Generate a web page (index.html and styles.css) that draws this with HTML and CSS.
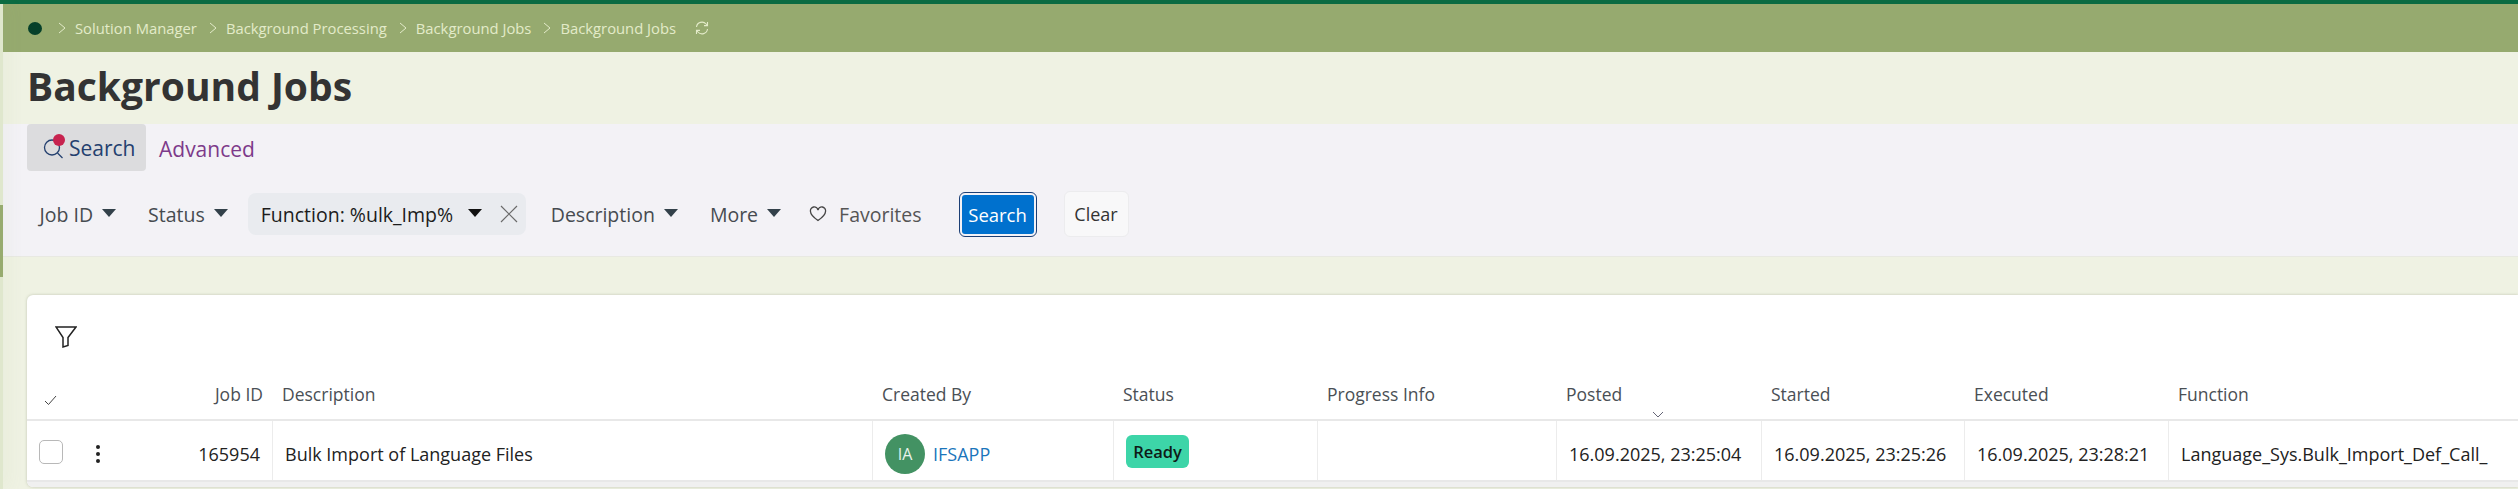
FILE: index.html
```html
<!DOCTYPE html>
<html lang="en">
<head>
<meta charset="utf-8">
<title>Background Jobs</title>
<link rel="stylesheet" href="styles.css">
</head>
<body>
<div class="topline"></div>
<div class="shell">
  <div class="rail"><div class="rail-mark"></div></div>
  <main class="main">
    <nav class="crumbs">
      <span class="dot"></span>
      <svg class="chev" viewBox="0 0 8 12"><path d="M1 1l6 5-6 5"/></svg><span>Solution Manager</span>
      <svg class="chev" viewBox="0 0 8 12"><path d="M1 1l6 5-6 5"/></svg><span>Background Processing</span>
      <svg class="chev" viewBox="0 0 8 12"><path d="M1 1l6 5-6 5"/></svg><span>Background Jobs</span>
      <svg class="chev" viewBox="0 0 8 12"><path d="M1 1l6 5-6 5"/></svg><span>Background Jobs</span>
      <svg class="refresh" viewBox="0 0 16 16"><path d="M2.5 7a5.5 5.5 0 0 1 9.6-3l1.4 1.6M13.5 2v3.6H10M13.5 9a5.5 5.5 0 0 1-9.6 3L2.5 10.4M2.5 14v-3.6H6"/></svg>
    </nav>
    <h1 class="title">Background Jobs</h1>
    <section class="panel">
      <div class="tabs">
        <button class="tab tab-active">
          <span class="tab-icon">
            <svg viewBox="0 0 20 22"><circle cx="9" cy="10.5" r="7.5"/><path d="M14.500 16l5 5"/></svg>
            <span class="badge"></span>
          </span>Search</button>
        <button class="tab tab-link">Advanced</button>
      </div>
      <div class="filters">
        <span class="filter">Job ID<i class="caret"></i></span>
        <span class="filter">Status<i class="caret"></i></span>
        <span class="chip">Function: %ulk_Imp%<i class="caret caret-dark"></i>
          <svg class="close" viewBox="0 0 18 18"><path d="M1 1l16 16M17 1L1 17"/></svg></span>
        <span class="filter">Description<i class="caret"></i></span>
        <span class="filter">More<i class="caret"></i></span>
        <span class="fav">
          <svg viewBox="0 0 18 16"><path d="M9 14.500C4 11 1.500 8.500 1.500 5.500A3.800 3.800 0 0 1 9 4a3.800 3.800 0 0 1 7.500 1.500C16.500 8.500 14 11 9 14.500z"/></svg>Favorites</span>
        <button class="btn-primary">Search</button>
        <button class="btn-clear">Clear</button>
      </div>
    </section>
    <section class="card">
      <div class="toolbar">
        <svg class="funnel" viewBox="0 0 22 22"><path d="M1 1h20l-8 10.500v8l-5 1.500V11.500z"/></svg>
      </div>
      <div class="grid grid-head">
        <div class="cell check-head"><svg viewBox="0 0 13 10"><path d="M1 6l3.500 3.500L12 1"/></svg></div>
        <div class="cell num">Job ID</div>
        <div class="cell">Description</div>
        <div class="cell">Created By</div>
        <div class="cell">Status</div>
        <div class="cell">Progress Info</div>
        <div class="cell sorted">Posted<svg class="sort" viewBox="0 0 12 7"><path d="M1 1l5 5 5-5"/></svg></div>
        <div class="cell">Started</div>
        <div class="cell">Executed</div>
        <div class="cell">Function</div>
      </div>
      <div class="grid grid-row">
        <div class="cell select"><span class="checkbox"></span><span class="kebab"><i></i><i></i><i></i></span></div>
        <div class="cell num">165954</div>
        <div class="cell bordered">Bulk Import of Language Files</div>
        <div class="cell bordered user"><span class="avatar">IA</span><a class="user-link">IFSAPP</a></div>
        <div class="cell bordered"><span class="status">Ready</span></div>
        <div class="cell bordered"></div>
        <div class="cell bordered">16.09.2025, 23:25:04</div>
        <div class="cell bordered">16.09.2025, 23:25:26</div>
        <div class="cell bordered">16.09.2025, 23:28:21</div>
        <div class="cell bordered">Language_Sys.Bulk_Import_Def_Call_</div>
      </div>
      <div class="card-foot"></div>
    </section>
  </main>
</div>
</body>
</html>
```
FILE: styles.css
```css
* { box-sizing: border-box; }
html, body { margin: 0; height: 100%; }
body { font-family: "Open Sans", sans-serif; background: #eff2e3; overflow: hidden; color: #222; }
button { font-family: inherit; border: 0; margin: 0; }
.topline { height: 4px; background: #0a6b42; }
.shell { display: flex; height: 485px; }
.rail { width: 3px; flex: none; background: #dfe7cd; padding-top: 201px; position: relative; z-index: 1; box-shadow: 0 0 18px rgba(150,170,110,.3); }
.rail-mark { height: 72px; background: #97ab6f; }
.main { flex: 1; min-width: 0; }
.crumbs { height: 48px; background: #96aa6f; color: #e3ebc9; font-size: 14.800px; display: flex; align-items: center; padding-left: 25px; }
.dot { width: 14px; height: 13px; border-radius: 50%; background: #06402a; margin-right: 16px; }
.chev { width: 8px; height: 12px; fill: none; stroke: #e3ebc9; stroke-width: 1; margin-right: 9px; }
.crumbs span + .chev { margin-left: 12px; }
.crumbs .dot + .chev { margin-left: 0; }
.refresh { width: 16px; height: 16px; margin-left: 18px; fill: none; stroke: #e3ebc9; stroke-width: 1.100; }
.title { margin: 0; height: 72px; padding-left: 24px; font-size: 39px; font-weight: 700; line-height: 68px; color: #333; }
.panel { height: 133px; background: #f3f2f6; border-bottom: 1px solid #e8e9e2; padding-left: 24px; }
.tabs { display: flex; align-items: center; height: 47px; }
.tab { height: 47px; background: none; font-size: 21px; padding: 0; }
.tab-active { width: 119px; background: #dcdcde; border-radius: 4px; color: #24406f; display: flex; align-items: center; padding-left: 16px; }
.tab-icon { position: relative; width: 26px; height: 22px; flex: none; }
.tab-icon svg { width: 20px; height: 22px; fill: none; stroke: #24406f; stroke-width: 1.300; display: block; }
.badge { position: absolute; top: -3px; left: 10px; width: 12px; height: 12px; background: #c7234f; border-radius: 50%; }
.tab-link { color: #7d3a8a; margin-left: 13px; padding-top: 3px; }
.filters { display: flex; align-items: center; height: 86px; padding-left: 12.500px; font-size: 19.500px; color: #464b50; }
.filter { display: flex; align-items: center; margin-right: 32px; }
.caret { display: inline-block; width: 0; height: 0; border-left: 7.500px solid transparent; border-right: 7.500px solid transparent; border-top: 8px solid #33414a; margin-left: 9px; margin-top: -3px; }
.caret-dark { border-top-color: #111; margin-left: 15px; }
.chip { display: flex; align-items: center; height: 42px; width: 278px; padding-left: 13px; margin-left: -12px; margin-right: 25px; background: #e9ebef; border-radius: 8px; color: #1c1c1c; flex: none; }
.close { width: 18px; height: 18px; margin-left: 18px; fill: none; stroke: #6a6a6a; stroke-width: 1.200; }
.fav { display: flex; align-items: center; color: #555; margin-left: -4px; }
.fav svg { width: 18px; height: 16px; fill: none; stroke: #444; stroke-width: 1.300; margin-right: 12px; }
.btn-primary { width: 72px; height: 39px; margin-left: 40px; background: #0071ce; color: #fff; border-radius: 3px; font-size: 18.500px; outline: 1.500px solid #1c3f75; outline-offset: 2px; padding: 0; flex: none; }
.btn-clear { width: 65px; height: 46px; margin-left: 30px; background: #f8f8f9; border: 1px solid #ececee; border-radius: 6px; font-size: 18px; color: #333; padding: 0; flex: none; }
.card { margin: 38px 0 0 24px; height: 192px; background: #fff; border-radius: 6px 0 0 6px; box-shadow: 0 0 3px rgba(120,130,100,.4); overflow: hidden; }
.toolbar { height: 78px; padding: 31px 0 0 28px; }
.funnel { width: 22px; height: 22px; fill: none; stroke: #222; stroke-width: 1.500; display: block; }
.grid { display: grid; grid-template-columns: 125px 120px 600px 241px 204px 239px 205px 203px 204px 1fr; }
.grid-head { height: 48px; border-bottom: 2px solid #e8e8e8; color: #4a4f55; font-size: 17.500px; }
.grid-head .cell { padding-left: 10px; padding-top: 9px; }
.grid-row { height: 59px; font-size: 18px; color: #222; }
.cell { display: flex; align-items: flex-start; min-width: 0; white-space: nowrap; }
.grid-row .cell { align-items: center; padding-left: 12px; padding-top: 6px; }
.bordered { border-left: 1px solid #ececec; }
.grid-head .num { justify-content: flex-end; padding: 9px 9px 0 0; }
.grid-row .num { justify-content: flex-end; padding: 6px 12px 0 0; }
.check-head svg { width: 13px; height: 10px; fill: none; stroke: #444; stroke-width: 1; margin: 13px 0 0 7px; }
.sorted { position: relative; }
.sort { position: absolute; width: 12px; height: 7px; left: 96px; top: 38px; fill: none; stroke: #667; stroke-width: 1; }
.select { gap: 33px; }
.checkbox { width: 24px; height: 24px; border: 1px solid #b8b8b8; border-radius: 5px; background: #fff; margin-top: -3px; }
.kebab { display: flex; flex-direction: column; gap: 3px; }
.kebab i { width: 4px; height: 4px; background: #222; border-radius: 50%; }
.user { gap: 8px; }
.avatar { width: 40px; height: 40px; border-radius: 50%; background: #439263; color: #e8f2ec; font-size: 16px; display: flex; align-items: center; justify-content: center; }
.user-link { color: #1b75bb; }
.status { background: #3dd5a8; color: #0e1a16; font-size: 16.500px; font-weight: 600; border-radius: 6px; width: 63px; height: 33px; display: flex; align-items: center; justify-content: center; margin-top: -4px; }
.card-foot { height: 7px; background: #f0f0f0; border-top: 2px solid #e8e8e8; }
```
